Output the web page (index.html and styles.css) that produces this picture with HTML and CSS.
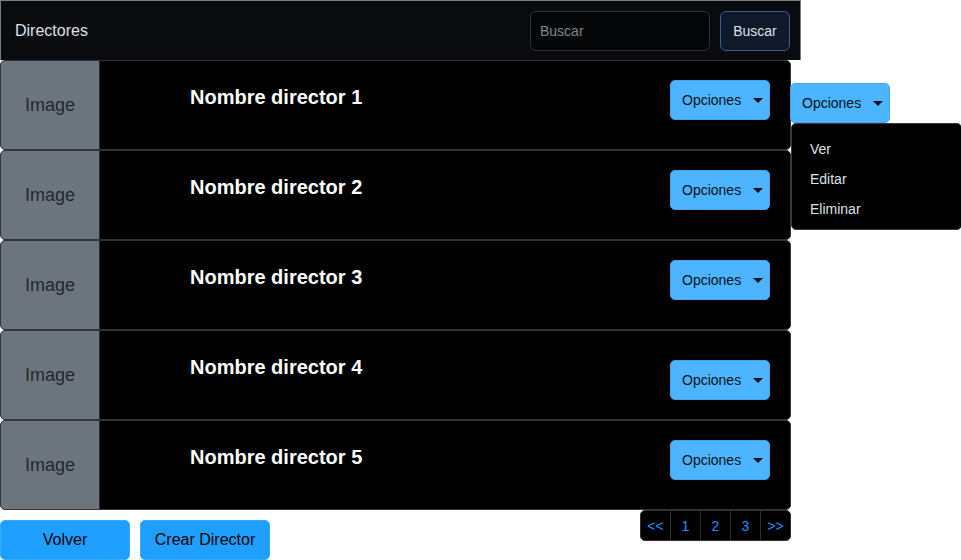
FILE: index.html
```html
<!DOCTYPE html>
<html lang="es">
<head>
<meta charset="utf-8">
<title>Directores</title>
<link rel="stylesheet" href="styles.css">
</head>
<body>
<div class="page">
  <header class="topbar">
    <span class="brand">Directores</span>
    <form class="search">
      <input class="search-input" type="text" placeholder="Buscar">
      <button class="search-btn" type="button">Buscar</button>
    </form>
  </header>

  <div class="list">
    <div class="card">
      <div class="thumb">Image</div>
      <div class="card-body">
        <h3 class="name">Nombre director 1</h3>
        <div class="actions">
          <button class="opt-btn" type="button">Opciones<span class="caret"></span></button>
        </div>
      </div>
      <div class="dropdown">
        <button class="opt-btn opt-open" type="button">Opciones<span class="caret"></span></button>
        <ul class="menu">
          <li>Ver</li>
          <li>Editar</li>
          <li>Eliminar</li>
        </ul>
      </div>
    </div>
    <div class="card">
      <div class="thumb">Image</div>
      <div class="card-body">
        <h3 class="name">Nombre director 2</h3>
        <div class="actions">
          <button class="opt-btn" type="button">Opciones<span class="caret"></span></button>
        </div>
      </div>
    </div>
    <div class="card">
      <div class="thumb">Image</div>
      <div class="card-body">
        <h3 class="name">Nombre director 3</h3>
        <div class="actions">
          <button class="opt-btn" type="button">Opciones<span class="caret"></span></button>
        </div>
      </div>
    </div>
    <div class="card">
      <div class="thumb">Image</div>
      <div class="card-body">
        <h3 class="name">Nombre director 4</h3>
        <div class="actions actions-low">
          <button class="opt-btn" type="button">Opciones<span class="caret"></span></button>
        </div>
      </div>
    </div>
    <div class="card">
      <div class="thumb">Image</div>
      <div class="card-body">
        <h3 class="name">Nombre director 5</h3>
        <div class="actions">
          <button class="opt-btn" type="button">Opciones<span class="caret"></span></button>
        </div>
      </div>
    </div>
  </div>

  <div class="footer">
    <div class="footer-btns">
      <button class="main-btn btn-volver" type="button">Volver</button>
      <button class="main-btn btn-crear" type="button">Crear Director</button>
    </div>
    <nav class="pager">
      <a class="page-link">&lt;&lt;</a>
      <a class="page-link">1</a>
      <a class="page-link">2</a>
      <a class="page-link">3</a>
      <a class="page-link">&gt;&gt;</a>
    </nav>
  </div>
</div>
</body>
</html>
```

FILE: styles.css
```css
* { box-sizing: border-box; }
html, body { margin: 0; padding: 0; background: #ffffff; }
body {
  font-family: "Liberation Sans", Arial, sans-serif;
  color: #dee2e6;
}
.page { width: 961px; }

.topbar {
  width: 801px;
  height: 60px;
  background: #0a0b0e;
  border: 1px solid #7c7c7c;
  border-bottom: none;
  display: flex;
  align-items: center;
  justify-content: space-between;
  padding: 0 10px 0 14px;
}
.brand { font-size: 16px; color: #dee2e6; }
.search { display: flex; gap: 10px; margin: 0; }
.search-input {
  width: 180px;
  height: 40px;
  background: #050608;
  border: 1px solid #2e3236;
  border-radius: 6px;
  padding: 0 9px;
  font: 14px "Liberation Sans", Arial, sans-serif;
  color: #dee2e6;
  outline: none;
}
.search-input::placeholder { color: #80868b; }
.search-btn {
  width: 70px;
  height: 40px;
  background: #0e1a2a;
  border: 1px solid #3d5f8c;
  border-radius: 6px;
  color: #dee2e6;
  font: 14px "Liberation Sans", Arial, sans-serif;
  padding: 0;
}

.list { width: 791px; }
.card {
  position: relative;
  height: 90px;
  display: flex;
  background: #000;
  border: 1px solid #333437;
  border-radius: 5px;
}
.thumb {
  width: 99px;
  background: #6c757d;
  color: #23282d;
  font-size: 18px;
  display: flex;
  align-items: center;
  justify-content: center;
  border-radius: 4px 0 0 4px;
  border-right: 1px solid #2a2c2f;
}
.card-body {
  flex: 1;
  display: flex;
  justify-content: space-between;
  padding: 0 20px 0 90px;
}
.name {
  margin: 24px 0 0;
  font-size: 20px;
  line-height: 24px;
  font-weight: 700;
  color: #ffffff;
}
.actions { padding-top: 19px; }
.actions-low { padding-top: 29px; }

.opt-btn {
  width: 100px;
  height: 40px;
  background: #4db5ff;
  border: 1px solid #43a4ec;
  border-radius: 5px;
  color: #05101a;
  font: 14px "Liberation Sans", Arial, sans-serif;
  display: flex;
  align-items: center;
  padding: 0 0 0 11px;
}
.caret {
  display: inline-block;
  width: 0;
  height: 0;
  margin-left: 12px;
  border-top: 5px solid #05101a;
  border-left: 5px solid transparent;
  border-right: 5px solid transparent;
}

.dropdown {
  position: absolute;
  left: 789px;
  top: 22px;
  width: 171px;
}
.opt-open { width: 100px; }
.menu {
  list-style: none;
  margin: 0;
  padding: 10px 0 5px;
  background: #000;
  border: 1px solid #3a3b3e;
  border-radius: 5px;
  width: 171px;
  margin-left: 1px;
}
.menu li {
  height: 30px;
  line-height: 30px;
  padding-left: 18px;
  font-size: 14px;
  color: #dee2e6;
}

.footer {
  width: 791px;
  display: flex;
  justify-content: space-between;
  align-items: flex-start;
}
.footer-btns { display: flex; gap: 10px; padding-top: 10px; }
.main-btn {
  height: 40px;
  background: #1f9fff;
  border: 1px solid #3aabff;
  border-radius: 5px;
  color: #000;
  font: 16px "Liberation Sans", Arial, sans-serif;
  padding: 0;
}
.btn-volver { width: 130px; }
.btn-crear { width: 130px; }

.pager {
  display: flex;
  background: #000;
  border: 1px solid #2c2e31;
  border-radius: 5px;
  overflow: hidden;
}
.page-link {
  width: 30px;
  height: 29px;
  display: flex;
  align-items: center;
  justify-content: center;
  color: #1e8fff;
  font-size: 14px;
  border-left: 1px solid #2c2e31;
}
.page-link:first-child { border-left: none; width: 29px; }
```
